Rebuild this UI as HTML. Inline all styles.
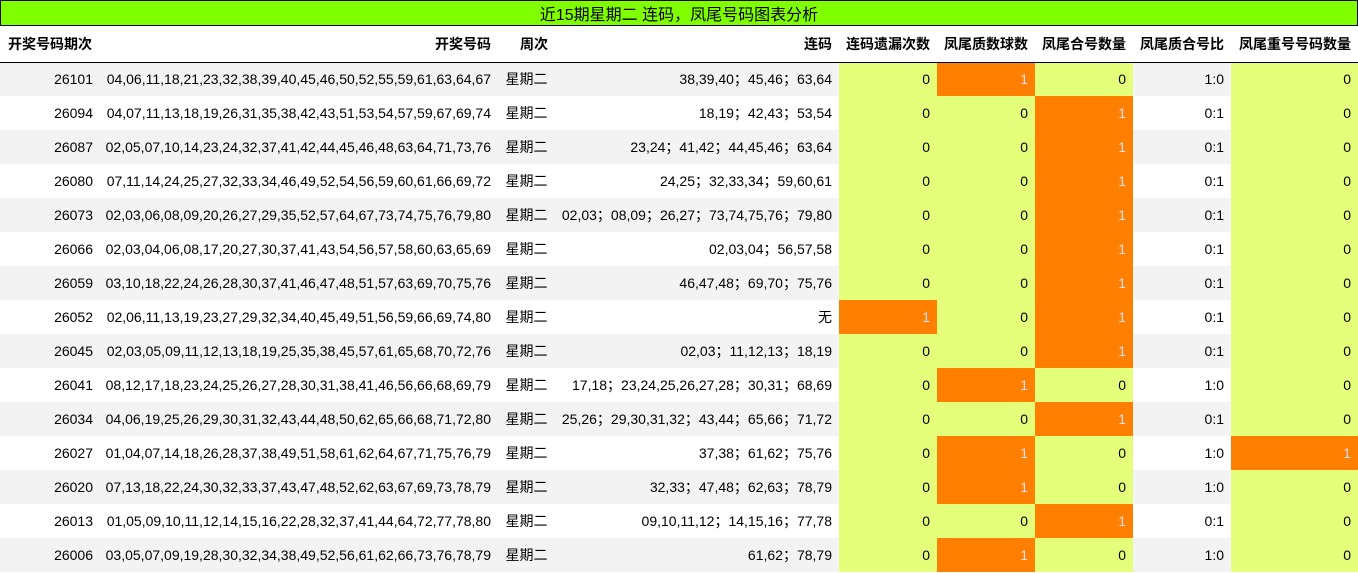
<!DOCTYPE html>
<html><head><meta charset="utf-8"><style>
*{margin:0;padding:0;box-sizing:border-box}
body{width:1358px;height:573px;overflow:hidden;background:#fff;font-family:"Liberation Sans","Noto Sans CJK SC",sans-serif;font-size:14px;color:#000}
.title{height:26px;background:#7fff00;border:1px solid #000;text-align:center;font-size:16px;line-height:24px;padding-top:3px}
table{border-collapse:collapse;table-layout:fixed;width:1358px}
td,th{text-align:right;padding:0 7px 0 0;white-space:nowrap;height:34px}
th{font-weight:bold;height:36px;border-bottom:1px solid #000;padding-top:1px}
th.l{text-align:left;padding-left:8px}
tr.g td{background:#f3f3f3}
tr td.y{background:#e6ff7a}
tr td.o{background:#ff8000;color:#fde}
td.c{text-align:center;padding:0}
</style></head><body>
<div class="title">近15期星期二 连码，凤尾号码图表分析</div>
<table>
<colgroup><col style="width:100px"><col style="width:398px"><col style="width:57px"><col style="width:284px"><col style="width:98px"><col style="width:98px"><col style="width:98px"><col style="width:98px"><col style="width:127px"></colgroup>
<tr><th class="l">开奖号码期次</th><th>开奖号码</th><th>周次</th><th>连码</th><th>连码遗漏次数</th><th>凤尾质数球数</th><th>凤尾合号数量</th><th>凤尾质合号比</th><th>凤尾重号号码数量</th></tr>
<tr class="g"><td>26101</td><td>04,06,11,18,21,23,32,38,39,40,45,46,50,52,55,59,61,63,64,67</td><td class="c">星期二</td><td>38,39,40；45,46；63,64</td><td class="y">0</td><td class="o">1</td><td class="y">0</td><td>1:0</td><td class="y">0</td></tr>
<tr><td>26094</td><td>04,07,11,13,18,19,26,31,35,38,42,43,51,53,54,57,59,67,69,74</td><td class="c">星期二</td><td>18,19；42,43；53,54</td><td class="y">0</td><td class="y">0</td><td class="o">1</td><td>0:1</td><td class="y">0</td></tr>
<tr class="g"><td>26087</td><td>02,05,07,10,14,23,24,32,37,41,42,44,45,46,48,63,64,71,73,76</td><td class="c">星期二</td><td>23,24；41,42；44,45,46；63,64</td><td class="y">0</td><td class="y">0</td><td class="o">1</td><td>0:1</td><td class="y">0</td></tr>
<tr><td>26080</td><td>07,11,14,24,25,27,32,33,34,46,49,52,54,56,59,60,61,66,69,72</td><td class="c">星期二</td><td>24,25；32,33,34；59,60,61</td><td class="y">0</td><td class="y">0</td><td class="o">1</td><td>0:1</td><td class="y">0</td></tr>
<tr class="g"><td>26073</td><td>02,03,06,08,09,20,26,27,29,35,52,57,64,67,73,74,75,76,79,80</td><td class="c">星期二</td><td>02,03；08,09；26,27；73,74,75,76；79,80</td><td class="y">0</td><td class="y">0</td><td class="o">1</td><td>0:1</td><td class="y">0</td></tr>
<tr><td>26066</td><td>02,03,04,06,08,17,20,27,30,37,41,43,54,56,57,58,60,63,65,69</td><td class="c">星期二</td><td>02,03,04；56,57,58</td><td class="y">0</td><td class="y">0</td><td class="o">1</td><td>0:1</td><td class="y">0</td></tr>
<tr class="g"><td>26059</td><td>03,10,18,22,24,26,28,30,37,41,46,47,48,51,57,63,69,70,75,76</td><td class="c">星期二</td><td>46,47,48；69,70；75,76</td><td class="y">0</td><td class="y">0</td><td class="o">1</td><td>0:1</td><td class="y">0</td></tr>
<tr><td>26052</td><td>02,06,11,13,19,23,27,29,32,34,40,45,49,51,56,59,66,69,74,80</td><td class="c">星期二</td><td>无</td><td class="o">1</td><td class="y">0</td><td class="o">1</td><td>0:1</td><td class="y">0</td></tr>
<tr class="g"><td>26045</td><td>02,03,05,09,11,12,13,18,19,25,35,38,45,57,61,65,68,70,72,76</td><td class="c">星期二</td><td>02,03；11,12,13；18,19</td><td class="y">0</td><td class="y">0</td><td class="o">1</td><td>0:1</td><td class="y">0</td></tr>
<tr><td>26041</td><td>08,12,17,18,23,24,25,26,27,28,30,31,38,41,46,56,66,68,69,79</td><td class="c">星期二</td><td>17,18；23,24,25,26,27,28；30,31；68,69</td><td class="y">0</td><td class="o">1</td><td class="y">0</td><td>1:0</td><td class="y">0</td></tr>
<tr class="g"><td>26034</td><td>04,06,19,25,26,29,30,31,32,43,44,48,50,62,65,66,68,71,72,80</td><td class="c">星期二</td><td>25,26；29,30,31,32；43,44；65,66；71,72</td><td class="y">0</td><td class="y">0</td><td class="o">1</td><td>0:1</td><td class="y">0</td></tr>
<tr><td>26027</td><td>01,04,07,14,18,26,28,37,38,49,51,58,61,62,64,67,71,75,76,79</td><td class="c">星期二</td><td>37,38；61,62；75,76</td><td class="y">0</td><td class="o">1</td><td class="y">0</td><td>1:0</td><td class="o">1</td></tr>
<tr class="g"><td>26020</td><td>07,13,18,22,24,30,32,33,37,43,47,48,52,62,63,67,69,73,78,79</td><td class="c">星期二</td><td>32,33；47,48；62,63；78,79</td><td class="y">0</td><td class="o">1</td><td class="y">0</td><td>1:0</td><td class="y">0</td></tr>
<tr><td>26013</td><td>01,05,09,10,11,12,14,15,16,22,28,32,37,41,44,64,72,77,78,80</td><td class="c">星期二</td><td>09,10,11,12；14,15,16；77,78</td><td class="y">0</td><td class="y">0</td><td class="o">1</td><td>0:1</td><td class="y">0</td></tr>
<tr class="g"><td>26006</td><td>03,05,07,09,19,28,30,32,34,38,49,52,56,61,62,66,73,76,78,79</td><td class="c">星期二</td><td>61,62；78,79</td><td class="y">0</td><td class="o">1</td><td class="y">0</td><td>1:0</td><td class="y">0</td></tr>
</table>
</body></html>
